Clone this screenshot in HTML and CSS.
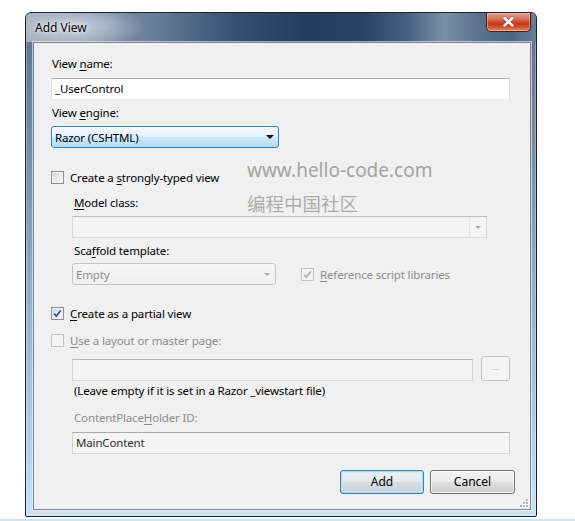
FILE: index.html
```html
<!DOCTYPE html>
<html lang="en">
<head>
<meta charset="utf-8">
<title>Add View</title>
<link rel="stylesheet" href="styles.css">
</head>
<body>
<div class="page">
  <div class="stage">
    <div class="window">
      <div class="titlebar">
        <span class="title">Add View</span>
        <div class="close">
          <svg width="43" height="18" viewBox="0 0 43 18"><path d="M17.5 5 L25.5 12.5 M25.5 5 L17.5 12.5" stroke="#5a1a10" stroke-width="3.6" stroke-linecap="round" opacity="0.35"/><path d="M17.5 5 L25.5 12.5 M25.5 5 L17.5 12.5" stroke="#ffffff" stroke-width="2.4" stroke-linecap="round"/></svg>
        </div>
      </div>
      <div class="client">
        <div class="label">View <u>n</u>ame:</div>
        <div class="textbox tb-name">_UserControl</div>
        <div class="label gap5">View <u>e</u>ngine:</div>
        <div class="combo combo-active"><span>Razor (CSHTML)</span><span class="arrow"></span></div>

        <div class="check-row gap21">
          <span class="cb"></span>
          <span>Create a <u>s</u>trongly-typed view</span>
        </div>

        <div class="indent">
          <div class="label ilabel gap10"><u>M</u>odel class:</div>
          <div class="combo combo-disabled combo-model"><span></span><span class="arrow-zone"><span class="arrow arrow-dis"></span></span></div>
          <div class="label ilabel gap5">Sca<u>f</u>fold template:</div>
          <div class="scaffold-row">
            <div class="combo combo-disabled combo-empty"><span class="dis-text">Empty</span><span class="arrow arrow-dis"></span></div>
            <div class="check-row ref-check">
              <span class="cb cb-dis"><svg width="11" height="11" viewBox="0 0 11 11"><path d="M2.2 5.6 L4.3 8.2 L8.8 2.4" fill="none" stroke="#a6a6a6" stroke-width="1.5"/></svg></span>
              <span class="dis-text"><u>R</u>eference script libraries</span>
            </div>
          </div>
        </div>

        <div class="check-row gap20">
          <span class="cb cb-on"><svg width="11" height="11" viewBox="0 0 11 11"><path d="M2.2 5.6 L4.3 8.2 L8.8 2.4" fill="none" stroke="#3f5382" stroke-width="1.7"/></svg></span>
          <span><u>C</u>reate as a partial view</span>
        </div>
        <div class="check-row gap11">
          <span class="cb cb-dis"></span>
          <span class="dis-text"><u>U</u>se a layout or master page:</span>
        </div>

        <div class="indent">
          <div class="layout-row">
            <div class="textbox tb-disabled tb-layout"></div>
            <div class="btn-browse">...</div>
          </div>
          <div class="label ilabel gap2">(Leave empty if it is set in a Razor _viewstart file)</div>
          <div class="label ilabel dis-text gap11">ContentPlace<u>H</u>older ID:</div>
          <div class="textbox tb-disabled tb-main">MainContent</div>
        </div>

        <div class="buttons">
          <div class="btn btn-default">Add</div>
          <div class="btn">Cancel</div>
        </div>

        <svg class="grip" width="10" height="10" viewBox="0 0 10 10">
          <g fill="#ffffff"><rect x="8" y="2" width="2" height="2"/><rect x="8" y="5" width="2" height="2"/><rect x="8" y="8" width="2" height="2"/><rect x="5" y="5" width="2" height="2"/><rect x="5" y="8" width="2" height="2"/><rect x="2" y="8" width="2" height="2"/></g>
          <g fill="#b4b8bd"><rect x="7" y="1" width="2" height="2"/><rect x="7" y="4" width="2" height="2"/><rect x="7" y="7" width="2" height="2"/><rect x="4" y="4" width="2" height="2"/><rect x="4" y="7" width="2" height="2"/><rect x="1" y="7" width="2" height="2"/></g>
        </svg>
      </div>
    </div>
    <div class="watermark wm-url">www.hello-code.com</div>
    <div class="watermark wm-cn">编程中国社区</div>
  </div>
  <div class="rule"></div>
</div>
</body>
</html>
```

FILE: styles.css
```css
* { box-sizing: border-box; }
html, body { margin: 0; padding: 0; background: #ffffff; }
body {
  font-family: "Noto Sans", "Segoe UI", sans-serif;
  font-size: 11.5px;
  letter-spacing: -0.15px;
  color: #000;
  width: 575px;
  height: 521px;
  overflow: hidden;
}
u { text-decoration: underline; text-underline-offset: 2px; text-decoration-thickness: 1px; }

.page { width: 575px; height: 521px; }
.stage { position: relative; padding: 12px 0 0 25px; }

.window {
  width: 512px;
  height: 505px;
  border: 1px solid #1b2431;
  border-radius: 6px 6px 2px 2px;
  background: linear-gradient(to bottom, #5f7188 0%, #768aa3 25%, #9bb2ca 60%, #bcd3e9 90%, #cfe2f3 100%);
  display: flex;
  flex-direction: column;
  box-shadow: inset 0 0 0 1px rgba(255,255,255,0.3);
}

.titlebar {
  height: 29px;
  display: flex;
  justify-content: space-between;
  align-items: flex-start;
  padding: 0 5px 0 9px;
  border-radius: 5px 5px 0 0;
  background:
    radial-gradient(ellipse 70px 22px at 50px 14px, rgba(225,232,240,0.7), rgba(225,232,240,0) 100%),
    linear-gradient(to right, #a3afbc 0%, #8b9bb0 12%, #5f7592 28%, #344d6d 42%, #243d5d 55%, #29425f 66%, #4a6280 75%, #7a8fa6 82%, #5a718d 89%, #4e6581 95%, #6a7f98 100%);
}
.title {
  line-height: 29px;
  font-size: 12px;
  letter-spacing: 0;
  color: #000;
  text-shadow: 0 0 6px rgba(255,255,255,0.9), 0 0 2px rgba(255,255,255,0.8);
}
.close {
  width: 45px;
  height: 19px;
  border: 1px solid #4b1b14;
  border-top: none;
  border-radius: 0 0 5px 5px;
  background: linear-gradient(to bottom, #e3a08e 0%, #d87a60 30%, #c8492b 50%, #c0391c 62%, #d8623f 85%, #e8906f 100%);
  box-shadow: inset 0 0 0 1px rgba(255,210,190,0.45);
  display: flex;
  align-items: center;
  justify-content: center;
}

.client {
  flex: 1;
  margin: 0 5px 6px 7px;
  background: #f0f0f0;
  border: 1px solid #76879b;
  box-shadow: 0 0 0 1px rgba(255,255,255,0.55);
  padding: 13px 20px 0 17px;
  position: relative;
  display: flex;
  flex-direction: column;
  align-items: flex-start;
}

.label { height: 16px; line-height: 16px; white-space: nowrap; padding-left: 1px; }
.ilabel { padding-left: 2px; }
.gap2 { margin-top: 2px; }
.gap5 { margin-top: 5px; }
.gap10 { margin-top: 10px; }
.gap11 { margin-top: 11px; }
.gap20 { margin-top: 20px; }
.gap21 { margin-top: 21px; }
.dis-text { color: #8d8d8d; }

.textbox {
  height: 22px;
  line-height: 20px;
  padding: 0 3px;
  background: #fff;
  border: 1px solid;
  border-color: #abadb3 #dbdfe6 #e3e9ef #e2e3ea;
  white-space: nowrap;
}
.tb-name { width: 459px; margin-top: 6px; }
.tb-disabled { background: #f4f4f4; border-color: #b3b6b9 #d2d4d7 #d9dbde #d2d4d7; }
.tb-layout { width: 401px; }
.tb-main { width: 438px; margin-top: 6px; color: #2e2e2e; border-color: #a9abb0 #cfd2d7 #d6d8dc #cfd2d7; }

.combo {
  height: 22px;
  display: flex;
  align-items: center;
  justify-content: space-between;
  white-space: nowrap;
}
.combo-active {
  width: 228px;
  margin-top: 5px;
  padding: 0 4px 0 3px;
  border: 1px solid #3c7fb1;
  border-radius: 3px;
  background: linear-gradient(to bottom, #f4fafe 0%, #e1f2fc 48%, #cbe9fa 52%, #b5dcf3 100%);
}
.combo-disabled {
  border: 1px solid #c3c5c8;
  background: #f4f4f4;
}
.combo-model {
  width: 415px;
  margin-top: 5px;
  border-color: #b9bbbe #d7d9dc #dcdee0 #d7d9dc;
  padding: 0;
}
.arrow-zone {
  width: 17px;
  height: 20px;
  display: flex;
  align-items: center;
  justify-content: center;
  border-left: 1px solid #e4e4e4;
}
.combo-empty {
  width: 204px;
  border-radius: 3px;
  padding: 0 5px 0 3px;
  background: linear-gradient(to bottom, #f6f6f6, #efefef);
}
.arrow {
  width: 0;
  height: 0;
  border-left: 4px solid transparent;
  border-right: 4px solid transparent;
  border-top: 4px solid #111;
}
.arrow-dis { border-left-width: 3px; border-right-width: 3px; border-top: 3px solid #a8a8a8; }

.indent { margin-left: 21px; display: flex; flex-direction: column; align-items: flex-start; }
.scaffold-row { display: flex; align-items: center; margin-top: 4px; }
.ref-check { margin-left: 25px; }

.check-row { display: flex; align-items: center; height: 16px; white-space: nowrap; }
.cb {
  width: 13px;
  height: 13px;
  margin-right: 6px;
  border: 1px solid #8e8f8f;
  background: linear-gradient(135deg, #cfd3d8 0%, #e8eaec 55%, #fbfbfb 100%);
  box-shadow: inset 0 0 0 1px #f3f3f3;
  display: flex;
  align-items: center;
  justify-content: center;
}
.cb-on { background: linear-gradient(135deg, #c9d2dc 0%, #e6ebf0 55%, #fafbfc 100%); }
.cb-dis { border-color: #c4c4c4; background: #f4f4f4; box-shadow: none; }

.layout-row { display: flex; align-items: flex-end; margin-top: 8px; }
.btn-browse {
  width: 29px;
  height: 25px;
  margin-left: 8px;
  border: 1px solid #c0c3c6;
  border-radius: 3px;
  background: #f4f4f4;
  color: #b0b0b0;
  font-size: 9px;
  line-height: 20px;
  text-align: center;
}

.buttons {
  align-self: stretch;
  display: flex;
  justify-content: flex-end;
  gap: 6px;
  margin-top: 16px;
  margin-right: -5px;
}
.btn {
  width: 85px;
  height: 24px;
  line-height: 22px;
  text-align: center;
  font-size: 12px;
  letter-spacing: 0;
  border: 1px solid #707070;
  border-radius: 3px;
  background: linear-gradient(to bottom, #f2f2f2 0%, #ebebeb 48%, #dddddd 52%, #cfcfcf 100%);
  box-shadow: inset 0 0 0 1px rgba(255,255,255,0.7);
}
.btn-default {
  width: 84px;
  border-color: #3c7fb1;
  box-shadow: inset 0 0 0 1px #a9dcf6, inset 0 0 0 2px rgba(200,235,252,0.6);
  background: linear-gradient(to bottom, #ecf0f2 0%, #e4e9ec 48%, #d6dde2 52%, #ccd3d8 100%);
}

.grip { position: absolute; right: 1px; bottom: 1px; }

.watermark { position: absolute; left: 247px; white-space: nowrap; color: #a3a3a3; letter-spacing: 0; }
.wm-url { top: 160px; font-size: 19px; line-height: 20px; }
.wm-cn { top: 194px; font-size: 18.5px; line-height: 18px; font-family: "Noto Sans CJK SC", "Noto Sans", sans-serif; color: #adadad; }

.rule { margin-top: 2px; height: 2px; background: #d3e3ea; }
```
